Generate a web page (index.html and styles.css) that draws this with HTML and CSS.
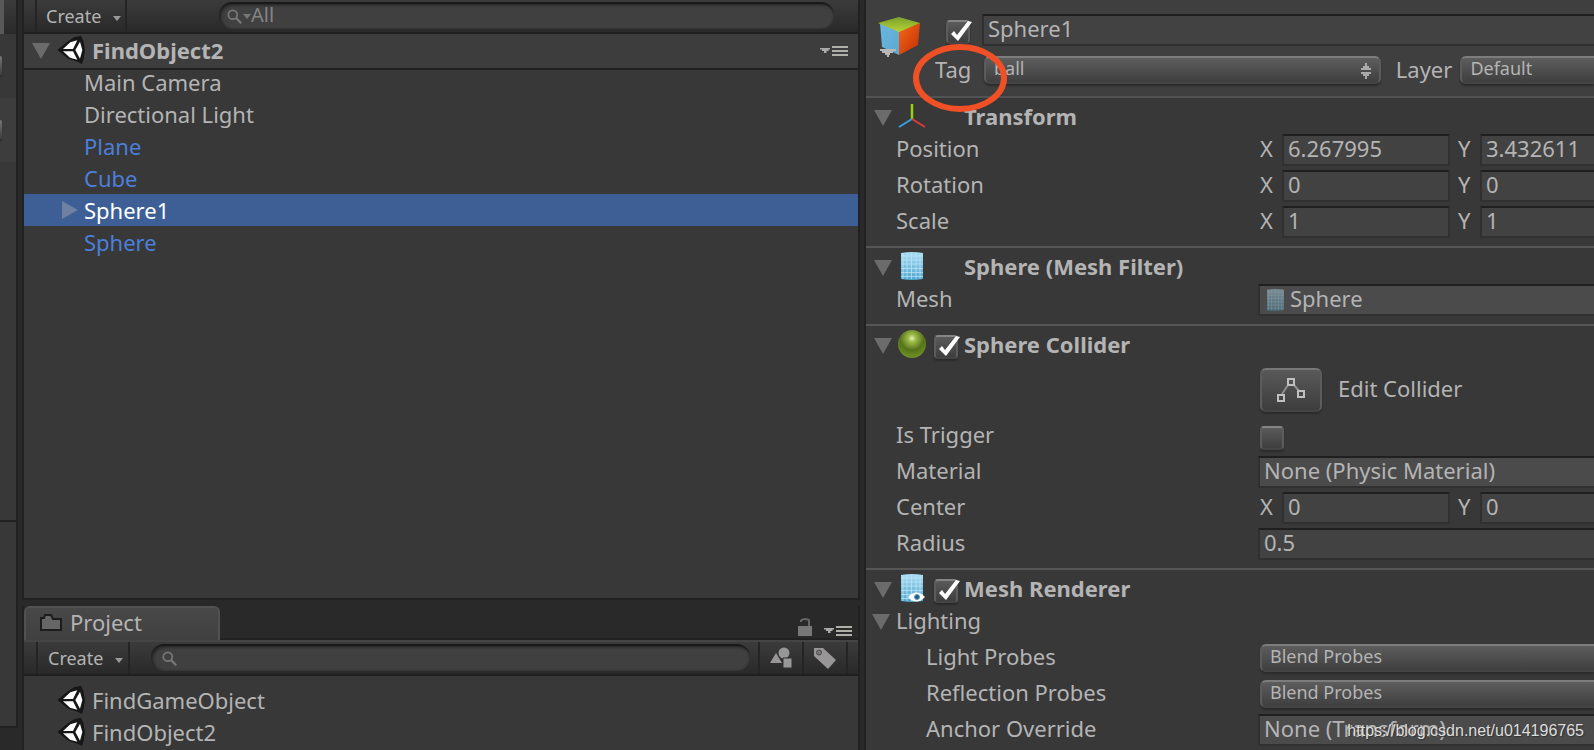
FILE: index.html
```html
<!DOCTYPE html>
<html lang="en">
<head>
<meta charset="utf-8">
<title>Editor</title>
<link rel="stylesheet" href="styles.css">
</head>
<body>
<svg class="defs" aria-hidden="true">
  <defs>
    <linearGradient id="blue" x1="0" y1="0" x2="0" y2="1"><stop offset="0" stop-color="#a9dcf3"/><stop offset="1" stop-color="#4fa6d0"/></linearGradient>
    <linearGradient id="side" x1="0" y1="0" x2="1" y2="1"><stop offset="0" stop-color="#6cb6dd"/><stop offset="1" stop-color="#5ba9d3"/></linearGradient>
    <linearGradient id="top" x1="0" y1="0" x2="0" y2="1"><stop offset="0" stop-color="#7ca02c"/><stop offset="1" stop-color="#b5d435"/></linearGradient>
    <linearGradient id="red" x1="0" y1="0" x2="1" y2="1"><stop offset="0" stop-color="#f26a1b"/><stop offset="1" stop-color="#c42c00"/></linearGradient>
    <radialGradient id="ball" cx="0.5" cy="0.3" r="0.7"><stop offset="0" stop-color="#e4f0b0"/><stop offset="0.2" stop-color="#9cba4a"/><stop offset="0.6" stop-color="#56721a"/><stop offset="1" stop-color="#6f9424"/></radialGradient>
    <symbol id="scene" viewBox="171 105 84 90">
      <path d="M172 150 200 127 222 112 243 107 250 122 255 150 251 176 246 192 234 186 205 176Z" fill="#161616"/>
      <path d="M189 147 211 127 232 121 219 147ZM189 154H219L232 179 210 173ZM226 150 240 125 247 150 240 176Z" fill="#fff"/>
    </symbol>
    <symbol id="mesh" viewBox="0 0 28 28">
      <path d="M3 1Q14-1 25 1V27Q14 29 3 27Z" fill="url(#blue)"/>
      <path d="M5 1V27M9 1V27M13.500 1V27M18 1V27M22 1V27M3 4H25M3 8H25M3 12H25M3 16.500H25M3 20.500H25M3 24.500H25" stroke="#bfe7f7" stroke-width=".9" fill="none" opacity=".8"/>
    </symbol>
    <symbol id="menu" viewBox="0 0 28 10"><path d="M0 2H10V3.500H8.500V5H6.500V7H4V5H2V3.500H0Z" fill="#aaa"/><path d="M12 1H28M12 5H28M12 9H28" stroke="#b0b0ab" stroke-width="2"/></symbol>
    <symbol id="glass" viewBox="0 0 18 18"><circle cx="6.500" cy="6.500" r="5" fill="none" stroke="#777" stroke-width="2"/><path d="M10 10 16 16" stroke="#777" stroke-width="2.500"/></symbol>
  </defs>
</svg>
<main class="editor">
  <aside class="strip">
    <div class="strip-bar"></div>
    <div class="strip-row"><i></i></div>
    <div class="strip-row lit"><i></i></div>
    <div class="strip-fill"></div>
    <div class="strip-foot"></div>
  </aside>

  <div class="column">
    <section class="panel hierarchy">
      <div class="toolbar">
        <button class="create">Create <span class="drop"></span></button>
        <label class="search wide"><svg class="glass"><use href="#glass"/></svg><span class="drop dim"></span><input type="text" placeholder="All" aria-label="Search hierarchy"></label>
      </div>
      <header class="scene">
        <span class="caret"></span><svg class="scene-icon"><use href="#scene"/></svg><h2>FindObject2</h2>
        <button class="menu" aria-label="Scene menu"><svg><use href="#menu"/></svg></button>
      </header>
      <ul class="tree">
        <li>Main Camera</li>
        <li>Directional Light</li>
        <li class="prefab">Plane</li>
        <li class="prefab">Cube</li>
        <li class="selected"><span class="caret right"></span>Sphere1</li>
        <li class="prefab">Sphere</li>
      </ul>
    </section>

    <section class="project">
      <div class="tabs">
        <button class="tab"><svg class="folder" viewBox="0 0 22 18"><path d="M1 17V5H4L5 2H11L13 6H21V17Z" fill="#666" stroke="#1c1c1c" stroke-width="2"/></svg>Project</button>
        <svg class="lock" viewBox="0 0 14 18"><path d="M0 8H14V18H0Z" fill="#777"/><path d="M3 4V2.500Q6 0 11 2V8" fill="none" stroke="#666" stroke-width="2"/></svg>
        <button class="menu" aria-label="Project menu"><svg><use href="#menu"/></svg></button>
      </div>
      <div class="toolbar lower">
        <button class="create">Create <span class="drop"></span></button>
        <label class="search"><svg class="glass"><use href="#glass"/></svg><input type="text" aria-label="Search project"></label>
        <button class="filter" aria-label="Search by type"><svg viewBox="0 0 22 22"><path d="M0 16 6 6 12 16Z" fill="#989696"/><circle cx="14" cy="6" r="5.500" fill="#989696"/><path d="M13 11H22V21H13Z" fill="#989696" stroke="#333" stroke-width="1"/></svg></button>
        <button class="filter" aria-label="Search by label"><svg viewBox="0 0 22 22"><path d="M0 1H9L22 13 14 22 0 9Z" fill="#989696"/><circle cx="5" cy="5.500" r="2.500" fill="#777" stroke="#4a4a4a"/></svg></button>
        <span class="filter-end"></span>
      </div>
      <ul class="assets">
        <li><svg class="scene-icon"><use href="#scene"/></svg>FindGameObject</li>
        <li><svg class="scene-icon"><use href="#scene"/></svg>FindObject2</li>
      </ul>
    </section>
  </div>

  <section class="inspector">
    <header class="object">
      <svg class="cube" viewBox="0 0 46 42"><path d="M3 7 22 15V39L5 31Z" fill="url(#side)"/><path d="M22 15 43 7 41 29 22 39Z" fill="url(#red)"/><path d="M1 7 22 1 43 7 22 16Z" fill="url(#top)"/><path d="M3 33H19V35H16V37H13V39H12V41H10V39H8V37H5V35H3Z" fill="#b8b8b8"/></svg>
      <div class="object-fields">
        <div class="name-row"><input class="check" type="checkbox" checked aria-label="Active"><input class="field" type="text" value="Sphere1" aria-label="Name"></div>
        <div class="tag-row">
          <label for="tag">Tag</label>
          <span class="pick"><select id="tag"><option>ball</option></select><svg viewBox="0 0 10 16"><path d="M4 0H6V3H8V5H10V7H0V5H2V3H4ZM0 9H10V11H8V13H6V16H4V13H2V11H0Z" fill="#aaa"/></svg></span>
          <label for="layer">Layer</label>
          <select id="layer" class="cut"><option>Default</option></select>
        </div>
      </div>
      <svg class="ring" viewBox="0 0 94 68"><ellipse cx="47" cy="34" rx="44" ry="31" fill="none" stroke="#f05026" stroke-width="6"/></svg>
    </header>

    <section class="component">
      <div class="title"><span class="caret"></span><svg class="icon" viewBox="0 0 28 28"><path d="M14 17V2" stroke="#98d20c" stroke-width="2.500"/><path d="M14 17 1 25" stroke="#35a3e0" stroke-width="2"/><path d="M14 17 27 25" stroke="#dd3b3b" stroke-width="2"/></svg><h3>Transform</h3></div>
      <div class="row"><span>Position</span><div class="vector"><label for="px">X</label><input class="field" id="px" value="6.267995"><label for="py">Y</label><input class="field cut" id="py" value="3.432611"></div></div>
      <div class="row"><span>Rotation</span><div class="vector"><label for="rx">X</label><input class="field" id="rx" value="0"><label for="ry">Y</label><input class="field cut" id="ry" value="0"></div></div>
      <div class="row"><span>Scale</span><div class="vector"><label for="sx">X</label><input class="field" id="sx" value="1"><label for="sy">Y</label><input class="field cut" id="sy" value="1"></div></div>
    </section>

    <section class="component">
      <div class="title"><span class="caret"></span><svg class="icon"><use href="#mesh"/></svg><h3>Sphere (Mesh Filter)</h3></div>
      <div class="row"><span>Mesh</span><button class="field asset cut"><svg class="mini" preserveAspectRatio="none" viewBox="3 0 22 28"><use href="#mesh" width="28" height="28"/></svg>Sphere</button></div>
    </section>

    <section class="component">
      <div class="title"><span class="caret"></span><svg class="icon" viewBox="0 0 28 28"><circle cx="14" cy="14" r="14" fill="url(#ball)"/></svg><input class="check" type="checkbox" checked aria-label="Collider enabled"><h3>Sphere Collider</h3></div>
      <div class="row tall"><span></span><div class="edit"><button class="edit-button" id="edit" aria-label="Edit collider"><svg viewBox="0 0 28 24"><path d="M5 16 11 7M17 7 22 13" stroke="#909090" stroke-width="2"/><path d="M1 17H7V23H1ZM11 1H17V7H11ZM21 13H27V19H21Z" fill="none" stroke="#c0c0c0" stroke-width="2"/></svg></button><label for="edit">Edit Collider</label></div></div>
      <div class="row"><label for="trigger">Is Trigger</label><div class="edit toggle"><input class="check" id="trigger" type="checkbox"></div></div>
      <div class="row"><span>Material</span><button class="field asset cut">None (Physic Material)</button></div>
      <div class="row"><span>Center</span><div class="vector"><label for="cx">X</label><input class="field" id="cx" value="0"><label for="cy">Y</label><input class="field cut" id="cy" value="0"></div></div>
      <div class="row"><label for="radius">Radius</label><input class="field cut" id="radius" value="0.5"></div>
    </section>

    <section class="component last">
      <div class="title"><span class="caret"></span><svg class="icon" viewBox="0 0 28 28"><use href="#mesh" width="28" height="28"/><path d="M10 23Q18 14 27 23Q18 32 10 23Z" fill="#fff"/><circle cx="19" cy="23" r="2.500" fill="#2a5a78" stroke="#4aa0c8"/></svg><input class="check" type="checkbox" checked aria-label="Renderer enabled"><h3>Mesh Renderer</h3></div>
      <div class="row group"><span class="caret"></span><span>Lighting</span></div>
      <div class="row nested"><label for="lp">Light Probes</label><div class="edit"><select id="lp" class="cut"><option>Blend Probes</option></select></div></div>
      <div class="row nested"><label for="rp">Reflection Probes</label><div class="edit"><select id="rp" class="cut"><option>Blend Probes</option></select></div></div>
      <div class="row nested"><span>Anchor Override</span><button class="field asset cut">None (Transform)</button></div>
    </section>
  </section>
</main>
<div class="watermark">https://blog.csdn.net/u014196765</div>
</body>
</html>
```
FILE: styles.css
```css
* { box-sizing: border-box; }
body {
  margin: 0;
  background: #292929;
  color: #b4b4b4;
  font: 22px/32px "Noto Sans", "Open Sans", sans-serif;
}
button, input, select { font: inherit; color: inherit; margin: 0; border-radius: 0; outline: 0; }
button { background: none; border: 0; padding: 0; text-align: left; }
h2, h3 { margin: 0; font-size: 22px; line-height: 32px; font-weight: 700; }
ul { list-style: none; margin: 0; padding: 0; }
svg { display: block; }
.defs { position: absolute; width: 0; height: 0; }

.editor {
  display: grid;
  grid-template-columns: 18px minmax(0, 838fr) minmax(0, 730fr);
  column-gap: 4px;
  height: 100vh;
  overflow: hidden;
}

/* Neighbouring window at the left edge */
.strip { display: flex; flex-direction: column; border-right: 2px solid #212121; background: #383838; margin-bottom: 22px; border-bottom: 2px solid #212121; }
.strip-bar { height: 34px; background: linear-gradient(#3b3b3b, #2a2a2a); border-left: 4px solid #595959; }
.strip-row { height: 64px; padding-top: 22px; overflow: hidden; }
.strip-row.lit { background: #3d3d3d; }
.strip-row i { display: block; width: 2px; height: 20px; border-radius: 0 6px 6px 0; background: linear-gradient(#777, #3a3a3a); box-shadow: 0 1px 1px #1c1c1c; }
.strip-fill { height: 360px; border-bottom: 2px solid #212121; }
.strip-foot { flex: 1; }

.column { display: flex; flex-direction: column; gap: 6px; min-width: 0; }
.panel { flex: 1; min-height: 0; background: #383838; border: solid #212121; border-width: 0 2px 2px; }
.toolbar { display: flex; height: 34px; padding-left: 11px; background: linear-gradient(#3b3b3b, #292929); border-bottom: 2px solid #1f1f1f; font-size: 18px; line-height: 28px; }
.create { display: flex; align-items: center; gap: 12px; width: 92px; padding-left: 9px; border: solid #242424; border-width: 0 2px; }
.drop { margin-top: 4px; border: 4px solid transparent; border-top: 5px solid #999; border-bottom: 0; }
.drop.dim { margin: 0; border-top-color: #777; }
.search { display: flex; align-items: center; flex: 1; height: 27px; margin: 2px 24px 0 92px; padding-left: 8px; border-radius: 13px; background: #404040; border-top: 2px solid #191919; box-shadow: inset 2px 1px 3px #222, inset -1px 0 2px #333; }
.search input { flex: 1; min-width: 0; padding: 0 0 4px; border: 0; background: none; font-size: 20px; line-height: 22px; }
.search input::placeholder { color: #848484; opacity: 1; }
.glass { width: 16px; height: 16px; }

.scene { display: flex; align-items: center; height: 36px; padding: 0 10px 0 8px; background: #3d3d3d; border-bottom: 2px solid #212121; }
.caret { width: 18px; height: 16px; background: #6b6b6b; clip-path: polygon(0 0, 100% 0, 50% 100%); }
.caret.right { width: 16px; height: 18px; margin-right: 6px; background: #7080a0; clip-path: polygon(0 0, 100% 50%, 0 100%); }
.scene-icon { width: 28px; height: 30px; margin: 0 7px 2px; }
.scene h2 { flex: 1; padding-bottom: 2px; }
.menu svg { width: 28px; height: 10px; }
.tree { margin-top: -4px; }
.tree li { display: flex; align-items: center; height: 32px; padding-left: 60px; }
.tree .prefab { color: #4c7fd9; }
.tree .selected { background: #3e5f96; color: #fff; padding-left: 38px; }

.project { border: solid #212121; border-width: 0 2px; background: #383838; }
.tabs { display: flex; align-items: flex-end; height: 34px; padding-right: 6px; background: #292929; border-bottom: 2px solid #212121; }
.tab { display: flex; align-items: center; gap: 8px; width: 196px; height: 34px; margin: 0 auto -2px 0; padding: 0 0 4px 14px; border: 2px solid #515151; border-bottom: 0; border-radius: 6px 6px 0 0; background: linear-gradient(#484848, #404040); }
.folder { width: 22px; height: 18px; }
.lock { width: 14px; height: 18px; margin-right: 12px; margin-bottom: 2px; }
.tabs .menu { height: 14px; }
.toolbar.lower { height: 36px; padding-left: 12px; border-top: 2px solid #444; }
.lower .create { width: 94px; padding-left: 10px; }
.lower .search { margin: 2px 8px 0 21px; padding-left: 11px; }
.filter { width: 44px; padding: 0 0 1px 10px; border-left: 2px solid #242424; }
.filter svg { width: 22px; height: 22px; }
.filter-end { width: 12px; border-left: 2px solid #242424; }
.assets { padding: 8px 0 2px; }
.assets li { display: flex; align-items: center; height: 32px; padding-left: 26px; }
.assets .scene-icon { margin-bottom: 0; }

.inspector { min-width: 0; background: #383838; border-left: 2px solid #212121; }
.object { position: relative; display: flex; height: 98px; padding: 14px 0 0 11px; background: #3f3f3f; border-bottom: 2px solid #525252; }
.cube { width: 46px; height: 42px; margin-top: 2px; }
.object-fields { flex: 1; min-width: 0; padding-left: 12px; }
.name-row { display: flex; align-items: center; padding-left: 11px; }
.name-row .check { margin-top: 4px; }
.name-row .field { flex: 1; margin-left: 12px; border-right: 0; }
.tag-row { display: flex; align-items: center; height: 48px; gap: 8px; padding-bottom: 1px; }
.tag-row label { padding-bottom: 2px; }
.tag-row > label:first-child { width: 41px; }
.pick { position: relative; flex: 398; margin-right: 7px; }
.pick svg { position: absolute; right: 10px; top: 7px; width: 10px; height: 16px; pointer-events: none; }
.tag-row .cut { flex: 124; min-width: 0; }
.ring { position: absolute; left: 47px; top: 44px; width: 94px; height: 68px; z-index: 1; pointer-events: none; }

.field { display: block; width: 100%; min-width: 0; height: 32px; padding: 0 4px 4px; border: 2px solid #303030; border-top-color: #1f1f1f; background: #424242; line-height: 24px; }
.asset { display: flex; align-items: center; gap: 6px; background: #4b4b4b; white-space: nowrap; }
.field.cut { border-right: 0; }
.mini { width: 17px; height: 22px; margin: 4px 0 0 3px; filter: saturate(.6) brightness(.65); }
select { appearance: none; display: block; width: 100%; height: 28px; padding: 0 0 4px 8px; border: 2px solid #5c5c5c; border-top-color: #7d7d7d; border-bottom-color: #444; border-radius: 6px; background: linear-gradient(#5d5d5d, #3f3f3f); box-shadow: 0 2px 2px #2b2b2b; font-size: 18px; line-height: 20px; }
select.cut { border-right: 0; border-radius: 6px 0 0 6px; }
.check { appearance: none; flex: none; width: 24px; height: 24px; border: 2px solid #5c5c5c; border-top-color: #858585; border-bottom-color: #444; border-radius: 4px; background: linear-gradient(#5a5a5a, #3e3e3e); box-shadow: 0 2px 2px #2a2a2a; }
.check:checked::before { content: ""; display: block; width: 26px; height: 24px; margin: -2px; background: #fff; clip-path: polygon(5px 14px, 8px 11px, 11px 15px, 22px 1px, 26px 2px, 12px 21px); }

.component { padding-bottom: 6px; border-bottom: 2px solid #565656; }
.component.last { padding-bottom: 0; border-bottom: 0; }
.title { display: grid; grid-template-columns: 24px 36px 30px 1fr; align-items: center; height: 34px; padding: 2px 0 0 8px; }
.title h3 { grid-column: 4; padding-bottom: 4px; }
.title .check { margin-top: 2px; }
.icon { width: 28px; height: 28px; margin-bottom: 4px; }
.row { display: grid; grid-template-columns: 362px minmax(0, 1fr); align-items: center; height: 36px; padding-left: 30px; }
.row > label, .row > span:not(.caret), .vector label { padding-bottom: 4px; }
.row.tall { height: 58px; padding-top: 2px; }
.row.nested { grid-template-columns: 332px minmax(0, 1fr); padding-left: 60px; }
.row.group { grid-template-columns: 24px 1fr; padding-left: 6px; }
.vector { display: grid; grid-template-columns: 22px 168px 30px minmax(0, 1fr); align-items: center; padding-left: 2px; }
.vector label:nth-of-type(2) { padding-left: 8px; }
.edit { display: flex; align-items: center; gap: 16px; padding-left: 2px; }
.edit label { padding-bottom: 4px; }
.edit.toggle { padding-top: 4px; }
.edit-button { display: grid; place-items: center; width: 62px; height: 44px; border: 2px solid #5c5c5c; border-top-color: #777; border-bottom-color: #444; border-radius: 6px; background: linear-gradient(#595959, #3d3d3d); box-shadow: 0 2px 2px #2b2b2b; }
.edit-button svg { width: 28px; height: 24px; }

.watermark { position: absolute; right: 10px; bottom: 9px; color: #ddd; font: 16px/20px "Liberation Sans", Arial, sans-serif; text-shadow: 1px 1px 1px #333; }
```
